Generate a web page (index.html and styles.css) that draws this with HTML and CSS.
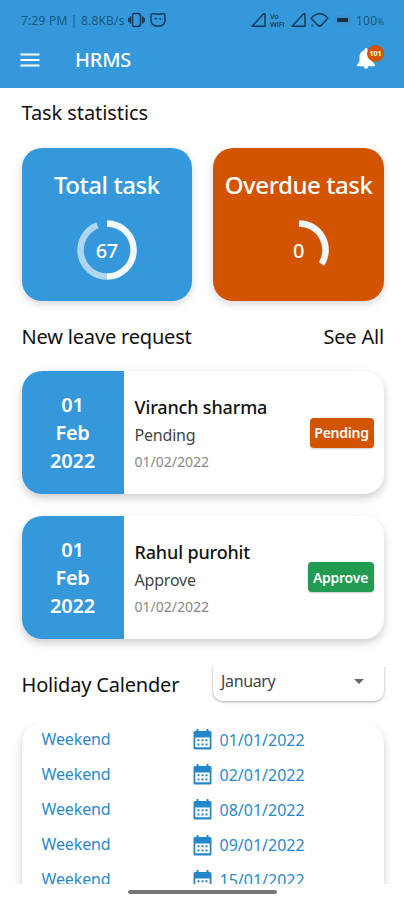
FILE: index.html
```html
<!DOCTYPE html>
<html lang="en">
<head>
<meta charset="utf-8">
<title>HRMS</title>
<link rel="stylesheet" href="styles.css">
</head>
<body>
<header class="top">
  <div class="status">
    <span class="clock">7:29 PM | 8.8KB/s</span>
    <svg class="vibrate" width="17" height="16" viewBox="0 0 17 16"><rect x="4.5" y="1.5" width="8" height="13" rx="2.5"/><path d="M2.3 4.5v7M14.7 4.5v7M.7 6v4M16.3 6v4"/></svg>
    <svg class="mask" width="16" height="16" viewBox="0 0 16 16"><path d="M1 3.2Q1 1.5 3 1.8Q8 2.6 13 1.8Q15 1.5 15 3.2V8Q15 14.2 8 14.2Q1 14.2 1 8Z"/><path d="M4.8 6.7h1.8M9.4 6.7h1.8"/></svg>
    <span class="grow"></span>
    <svg class="signal" width="16" height="16" viewBox="0 0 16 16"><path d="M1.2 14.2L12.2 2.2Q14 1 14 3V14.2Z"/></svg>
    <span class="vowifi">Vo<br>WiFi</span>
    <svg class="signal second" width="16" height="16" viewBox="0 0 16 16"><path d="M1.2 14.2L12.2 2.2Q14 1 14 3V14.2Z"/></svg>
    <svg class="wifi" width="19" height="16" viewBox="0 0 19 16"><path d="M1.3 6.4Q1.5 5.4 3.5 3.8Q9.5-.4 15.5 3.8Q17.5 5.4 17.7 6.4L11 13.4Q9.5 14.8 8 13.4Z"/><path d="M1.5 13.6h1.5"/></svg>
    <span class="battery"></span>
    <span class="percent">100<small>%</small></span>
  </div>
  <div class="bar">
    <svg class="menu" width="20" height="14" viewBox="0 0 20 14"><path d="M.5 1.5h19M.5 7h19M.5 12.5h19"/></svg>
    <h1>HRMS</h1>
    <div class="bell">
      <svg width="18" height="22" viewBox="0 0 18 22"><path d="M9 0Q10.6 0 10.6 2.2Q15.5 4 15.5 9V13.5L17.8 16.5V18.3H.2V16.5L2.5 13.5V9Q2.5 4 7.4 2.2Q7.4 0 9 0ZM6.8 18.3h4.4Q11 21 9 21Q7 21 6.8 18.3Z"/></svg>
      <span class="count">101</span>
    </div>
  </div>
</header>
<main class="content">
  <h2 class="stats-title">Task statistics</h2>
  <section class="stats">
    <article class="stat blue">
      <h3>Total task</h3>
      <div class="ring">
        <svg width="60" height="60" viewBox="0 0 60 60"><path class="track" d="M30 56.6A26.6 26.6 0 0 1 20.5 5.2"/><path d="M30 3.4A26.6 26.6 0 0 1 30 56.6"/></svg>
        <span>67</span>
      </div>
    </article>
    <article class="stat orange">
      <h3>Overdue task</h3>
      <div class="ring">
        <svg width="60" height="60" viewBox="0 0 60 60"><path d="M30 3.4A26.6 26.6 0 0 1 52.6 44"/></svg>
        <span>0</span>
      </div>
    </article>
  </section>
  <div class="section-head">
    <h2 class="leave-title">New leave request</h2>
    <a class="see-all">See All</a>
  </div>
  <article class="leave">
    <div class="date"><span>01</span><span>Feb</span><span>2022</span></div>
    <div class="info"><strong>Viranch sharma</strong><span class="state">Pending</span><time>01/02/2022</time></div>
    <span class="tag pending">Pending</span>
  </article>
  <article class="leave">
    <div class="date"><span>01</span><span>Feb</span><span>2022</span></div>
    <div class="info"><strong>Rahul purohit</strong><span class="state">Approve</span><time>01/02/2022</time></div>
    <span class="tag approve">Approve</span>
  </article>
  <div class="holiday-head">
    <h2 class="holiday-title">Holiday Calender</h2>
    <div class="month-clip"><div class="month"><span>January</span><svg width="10" height="5" viewBox="0 0 10 5"><path d="M0 0H10L5 5Z"/></svg></div></div>
  </div>
  <section class="holidays">
    <div class="sheet">
      <div class="day"><span>Weekend</span><svg class="cal" width="19" height="21" viewBox="0 0 19 21"><use href="#cal"/></svg><time>01/01/2022</time></div>
      <div class="day"><span>Weekend</span><svg class="cal" width="19" height="21" viewBox="0 0 19 21"><use href="#cal"/></svg><time>02/01/2022</time></div>
      <div class="day"><span>Weekend</span><svg class="cal" width="19" height="21" viewBox="0 0 19 21"><use href="#cal"/></svg><time>08/01/2022</time></div>
      <div class="day"><span>Weekend</span><svg class="cal" width="19" height="21" viewBox="0 0 19 21"><use href="#cal"/></svg><time>09/01/2022</time></div>
      <div class="day"><span>Weekend</span><svg class="cal" width="19" height="21" viewBox="0 0 19 21"><use href="#cal"/></svg><time>15/01/2022</time></div>
    </div>
  </section>
</main>
<footer class="nav"><span></span></footer>
<svg class="defs" width="0" height="0"><defs><g id="cal"><path fill-rule="evenodd" d="M3.5 0H5.5V2H13.5V0H15.5V2H17Q18.5 2 18.5 3.5V19Q18.5 20.5 17 20.5H2Q.5 20.5 .5 19V3.5Q.5 2 2 2H3.5ZM2.3 8.5V18.3H16.7V8.5Z"/><path d="M4.5 10.2h2v2h-2zM8.5 10.2h2v2h-2zM12.5 10.2h2v2h-2zM4.5 14.4h2v2h-2zM8.5 14.4h2v2h-2zM12.5 14.4h2v2h-2z"/></g></defs></svg>
</body>
</html>
```
FILE: styles.css
```css
* { box-sizing: border-box; }
body { margin: 0; width: 404px; height: 900px; overflow: hidden; background: #fff; color: #111; font-family: "Noto Sans", sans-serif; position: relative; }
h1, h2, h3 { margin: 0; font-weight: 400; white-space: nowrap; }
svg { display: block; flex: none; }
.defs { position: absolute; }

.top { height: 88px; background: #3498db; }
.status { display: flex; align-items: center; height: 40px; padding: 0 20px 0 21px; color: #1c587f; font-size: 12px; white-space: nowrap; }
.status svg { fill: none; stroke: #103b5a; stroke-width: 1.5; stroke-linejoin: round; }
.clock { width: 107px; letter-spacing: .2px; }
.mask { margin-left: 5px; }
.grow { flex: 1; }
.vowifi { width: 18px; margin: 0 3px 0 3px; font-size: 7.5px; line-height: 8px; font-weight: 500; letter-spacing: -.2px; color: #103b5a; }
.wifi { margin: 0 5px 0 3px; }
.battery { width: 17px; height: 11px; margin-right: 5px; border-radius: 4px; background: linear-gradient(#102f48, #102f48) center / 11px 4px no-repeat #3a91cd; }
.percent { width: 28px; letter-spacing: .2px; }
.percent small { font-size: 8px; }

.bar { display: flex; align-items: center; height: 40px; padding: 0 20px; }
.menu { stroke: #fff; stroke-width: 2; fill: none; }
.bar h1 { margin-left: 35px; flex: 1; color: #fff; font-size: 20px; font-weight: 500; line-height: 28px; letter-spacing: -.2px; }
.bell { position: relative; width: 27px; height: 24px; }
.bell svg { fill: #fff; }
.count { position: absolute; left: 10px; top: -3px; width: 17px; height: 17px; border-radius: 50%; background: #d35400; color: #fff; font-size: 7px; font-weight: 700; line-height: 17px; text-align: center; }

.content { height: 796px; padding: 0 20px 0 21.5px; overflow: hidden; }
h2, .see-all { font-size: 20px; line-height: 28px; white-space: nowrap; letter-spacing: -.18px; }
.stats-title { padding-top: 11px; height: 59.5px; letter-spacing: -.08px; }
.stats { display: grid; grid-template-columns: 1fr 1fr; gap: 21px; }
.stat { display: flex; flex-direction: column; align-items: center; height: 153.5px; padding-top: 20px; border-radius: 20px; color: #fff; box-shadow: 0 3px 8px rgba(0, 0, 0, .16); }
.blue { background: #3498db; }
.orange { background: #d35400; }
.stat h3 { font-size: 24px; font-weight: 500; line-height: 34px; letter-spacing: -.42px; }
.ring { display: grid; place-items: center; width: 60px; height: 60px; margin-top: 18.5px; font-size: 20px; font-weight: 500; letter-spacing: -.2px; }
.ring > * { grid-area: 1 / 1; }
.ring svg { fill: none; stroke: #f2f9ff; stroke-width: 6.5; }
.ring .track { stroke: #aed6f1; }

.section-head { display: flex; justify-content: space-between; height: 70px; padding-top: 22px; }
.leave { display: flex; align-items: center; height: 123px; margin-bottom: 21.5px; border-radius: 20px; background: #fff; box-shadow: 0 4px 10px rgba(0, 0, 0, .2); }
.date { display: flex; flex-direction: column; justify-content: center; align-items: center; width: 102px; height: 123px; padding-top: 1px; border-radius: 20px 0 0 20px; background: #3498db; color: #fff; font-size: 20px; font-weight: 600; line-height: 28px; letter-spacing: -.25px; }
.info { display: flex; flex-direction: column; flex: 1; padding: 2px 0 0 11px; white-space: nowrap; }
.info strong { font-size: 18px; font-weight: 500; line-height: 28px; color: #111; letter-spacing: -.15px; }
.state { font-size: 16px; line-height: 29px; color: #444; letter-spacing: -.2px; }
.info time { font-size: 14px; line-height: 24px; color: #888; }
.tag { display: flex; align-items: center; justify-content: center; height: 30px; margin-right: 10.5px; border-radius: 4px; color: #fff; font-size: 14px; font-weight: 600; letter-spacing: -.25px; box-shadow: 0 1px 2px rgba(0, 0, 0, .2); }
.pending { width: 64px; background: #d35400; }
.approve { width: 66px; background: #219a52; }

.holiday-head { display: flex; justify-content: space-between; height: 64px; margin-top: -1px; }
.holiday-title { padding-top: 12px; }
.month-clip { height: 40px; width: 181px; padding: 0 5px 5px; margin: 8px -5px 0 0; overflow: hidden; }
.month { display: flex; align-items: center; justify-content: space-between; height: 46px; margin-top: -12px; padding: 6px 20px 0 8px; border-radius: 10px; box-shadow: 0 1px 3px rgba(0, 0, 0, .35); font-size: 16px; color: #444; letter-spacing: -.35px; }
.month svg { fill: #666; }

.holidays { height: 180px; margin: 0 -20px; padding: 0 20px; overflow: hidden; }
.sheet { height: 240px; border-radius: 20px; box-shadow: 0 4px 9px rgba(0, 0, 0, .2); }
.day { display: grid; grid-template-columns: 151px 27px auto; align-items: center; height: 35.2px; padding: 0 0 2px 20px; color: #2b89ca; font-size: 16px; }
.day > span { letter-spacing: -.12px; padding-bottom: 2px; }
.cal { fill: #2487c9; }

.nav { display: flex; justify-content: center; padding-top: 6px; }
.nav span { width: 149px; height: 4px; border-radius: 2px; background: #777; }
```
